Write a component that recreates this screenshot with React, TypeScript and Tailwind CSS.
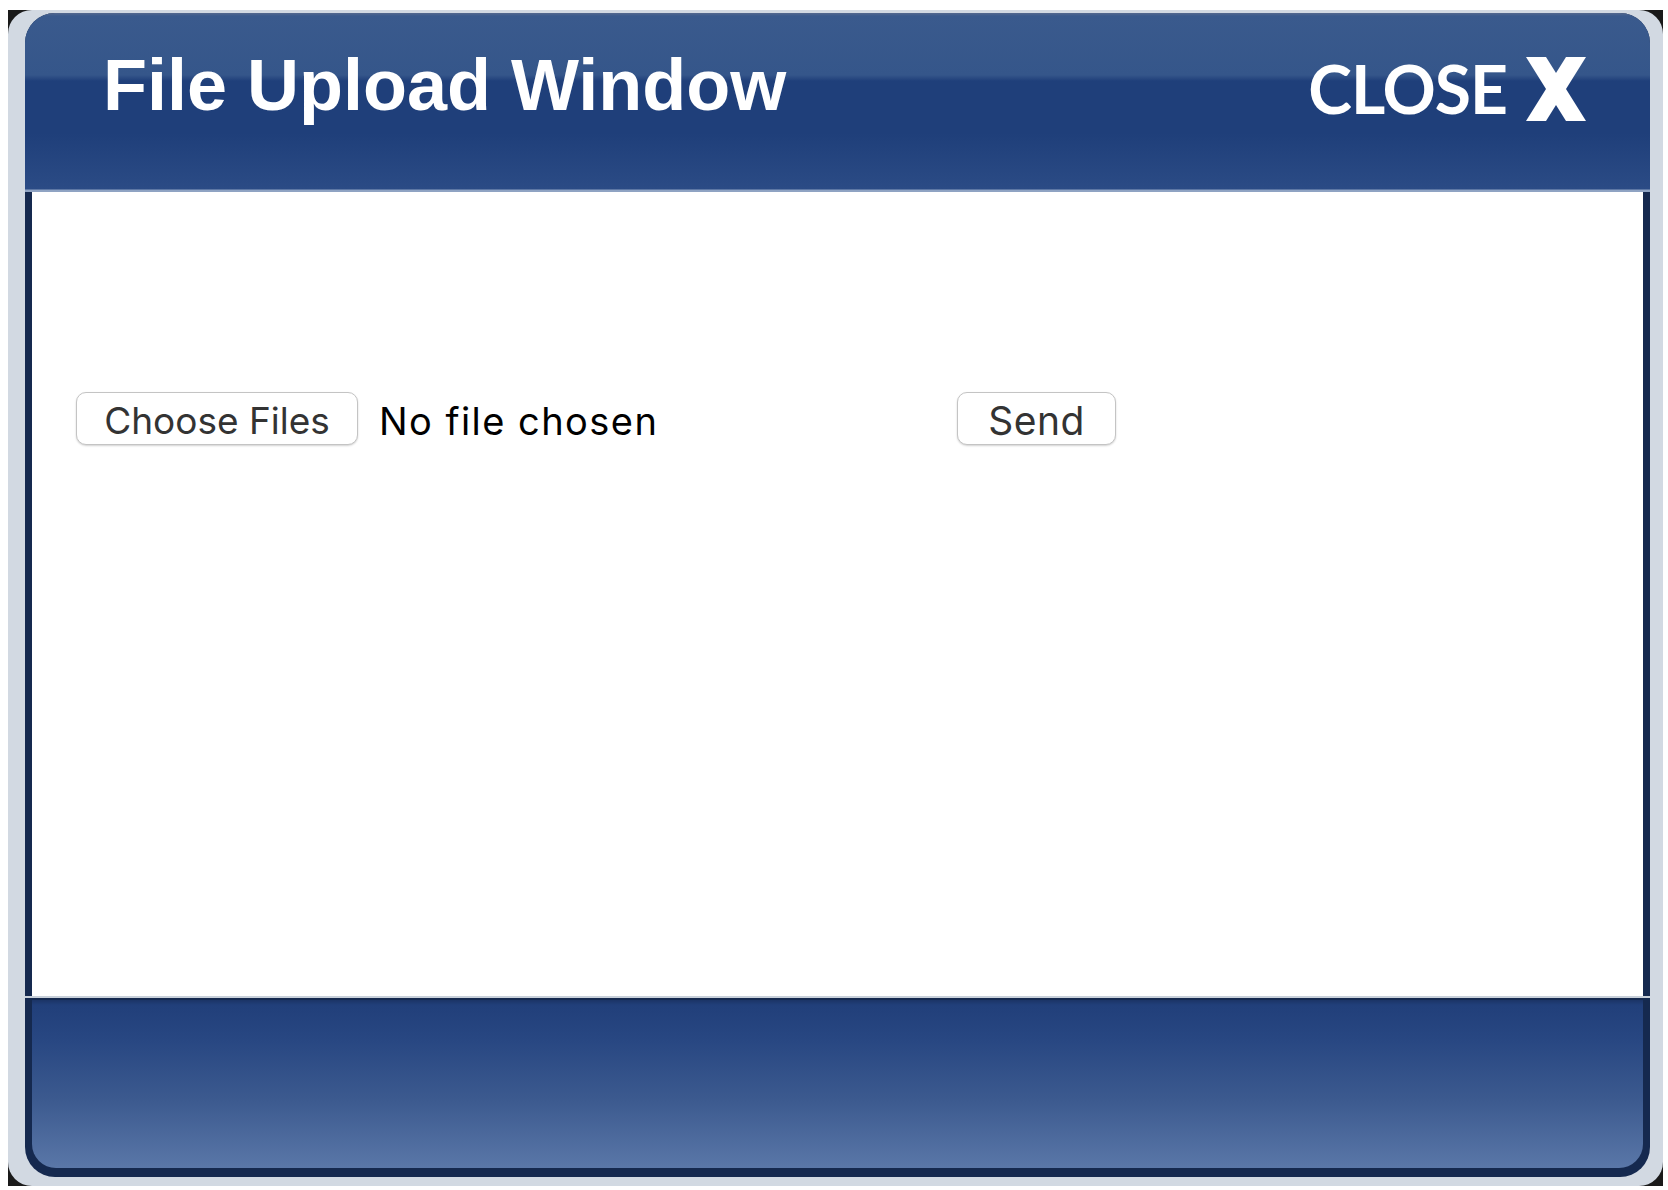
import React from "react";

function CloseX() {
  return (
    <svg width="64" height="64" viewBox="0 0 64 64" className="block">
      <polygon points="2,0 22,0 62,64 42,64" fill="#ffffff" />
      <polygon points="42,0 62,0 22,64 2,64" fill="#ffffff" />
    </svg>
  );
}

export default function App() {
  return (
    <div className="w-[1668px] h-[1190px] bg-white pt-[10px] pl-[8px] overflow-hidden">
      <div className="w-[1655px] h-[1176px] bg-[#1a1a1a]">
        <div className="h-full rounded-[24px] bg-[#d2d9e2] pl-[17px] pr-[13px] pt-[3px] pb-[9px]">
          <div className="h-full rounded-[30px] bg-[#15294f] flex flex-col overflow-hidden">
            {/* Header */}
            <div className="h-[179px] shrink-0 bg-[linear-gradient(to_bottom,#55698f_0px,#3a5a8d_3px,#35568a_62px,#2a4a82_65px,#1f3f7a_68px,#1f3f7a_120px,#2b4b85_176px,#8fa3c3_177px,#8fa3c3_179px)] flex items-start justify-between pl-[78px] pr-[62px]">
              <h1 className="mt-[36px] text-[72px] leading-none font-bold text-white font-['Liberation_Sans',Arial,sans-serif]">
                File Upload Window
              </h1>
              <div className="mt-[44px] h-[64px] flex items-center gap-[17px]">
                <span className="text-[66px] leading-none font-bold text-white tracking-[-1px] font-['Lato','Noto_Sans',sans-serif]">
                  CLOSE
                </span>
                <CloseX />
              </div>
            </div>
            {/* Body */}
            <div className="flex-1 mx-[7px] bg-white pl-[44px] pt-[200px]">
              <div className="flex items-center">
                <div className="w-[881px] flex items-center">
                  <button className="w-[282px] h-[53px] pt-[4px] rounded-[10px] border border-[#c4c4c4] bg-white shadow-[0_1px_2px_rgba(0,0,0,0.18)] text-[37px] leading-none text-[#333333] font-['Inter','Liberation_Sans',sans-serif] flex items-center justify-center">
                    Choose Files
                  </button>
                  <span className="ml-[21px] pt-[4px] text-[38px] leading-none text-black tracking-[1.45px] font-['Inter','Liberation_Sans',sans-serif]">
                    No file chosen
                  </span>
                </div>
                <button className="w-[159px] h-[53px] pt-[4px] rounded-[10px] border border-[#c4c4c4] bg-white shadow-[0_1px_2px_rgba(0,0,0,0.18)] text-[39px] leading-none text-[#333333] tracking-[0.5px] font-['Inter','Liberation_Sans',sans-serif] flex items-center justify-center">
                  Send
                </button>
              </div>
            </div>
            {/* Footer */}
            <div className="h-[181px] shrink-0 border-t-2 border-[#c8d0da] pt-[2px] pb-[9px] px-[7px]">
              <div className="h-full rounded-b-[24px] bg-[linear-gradient(to_bottom,#1b3466_0px,#213f7a_5px,#284782_40px,#3c5a8f_100px,#5a77a8_168px)]" />
            </div>
          </div>
        </div>
      </div>
    </div>
  );
}
